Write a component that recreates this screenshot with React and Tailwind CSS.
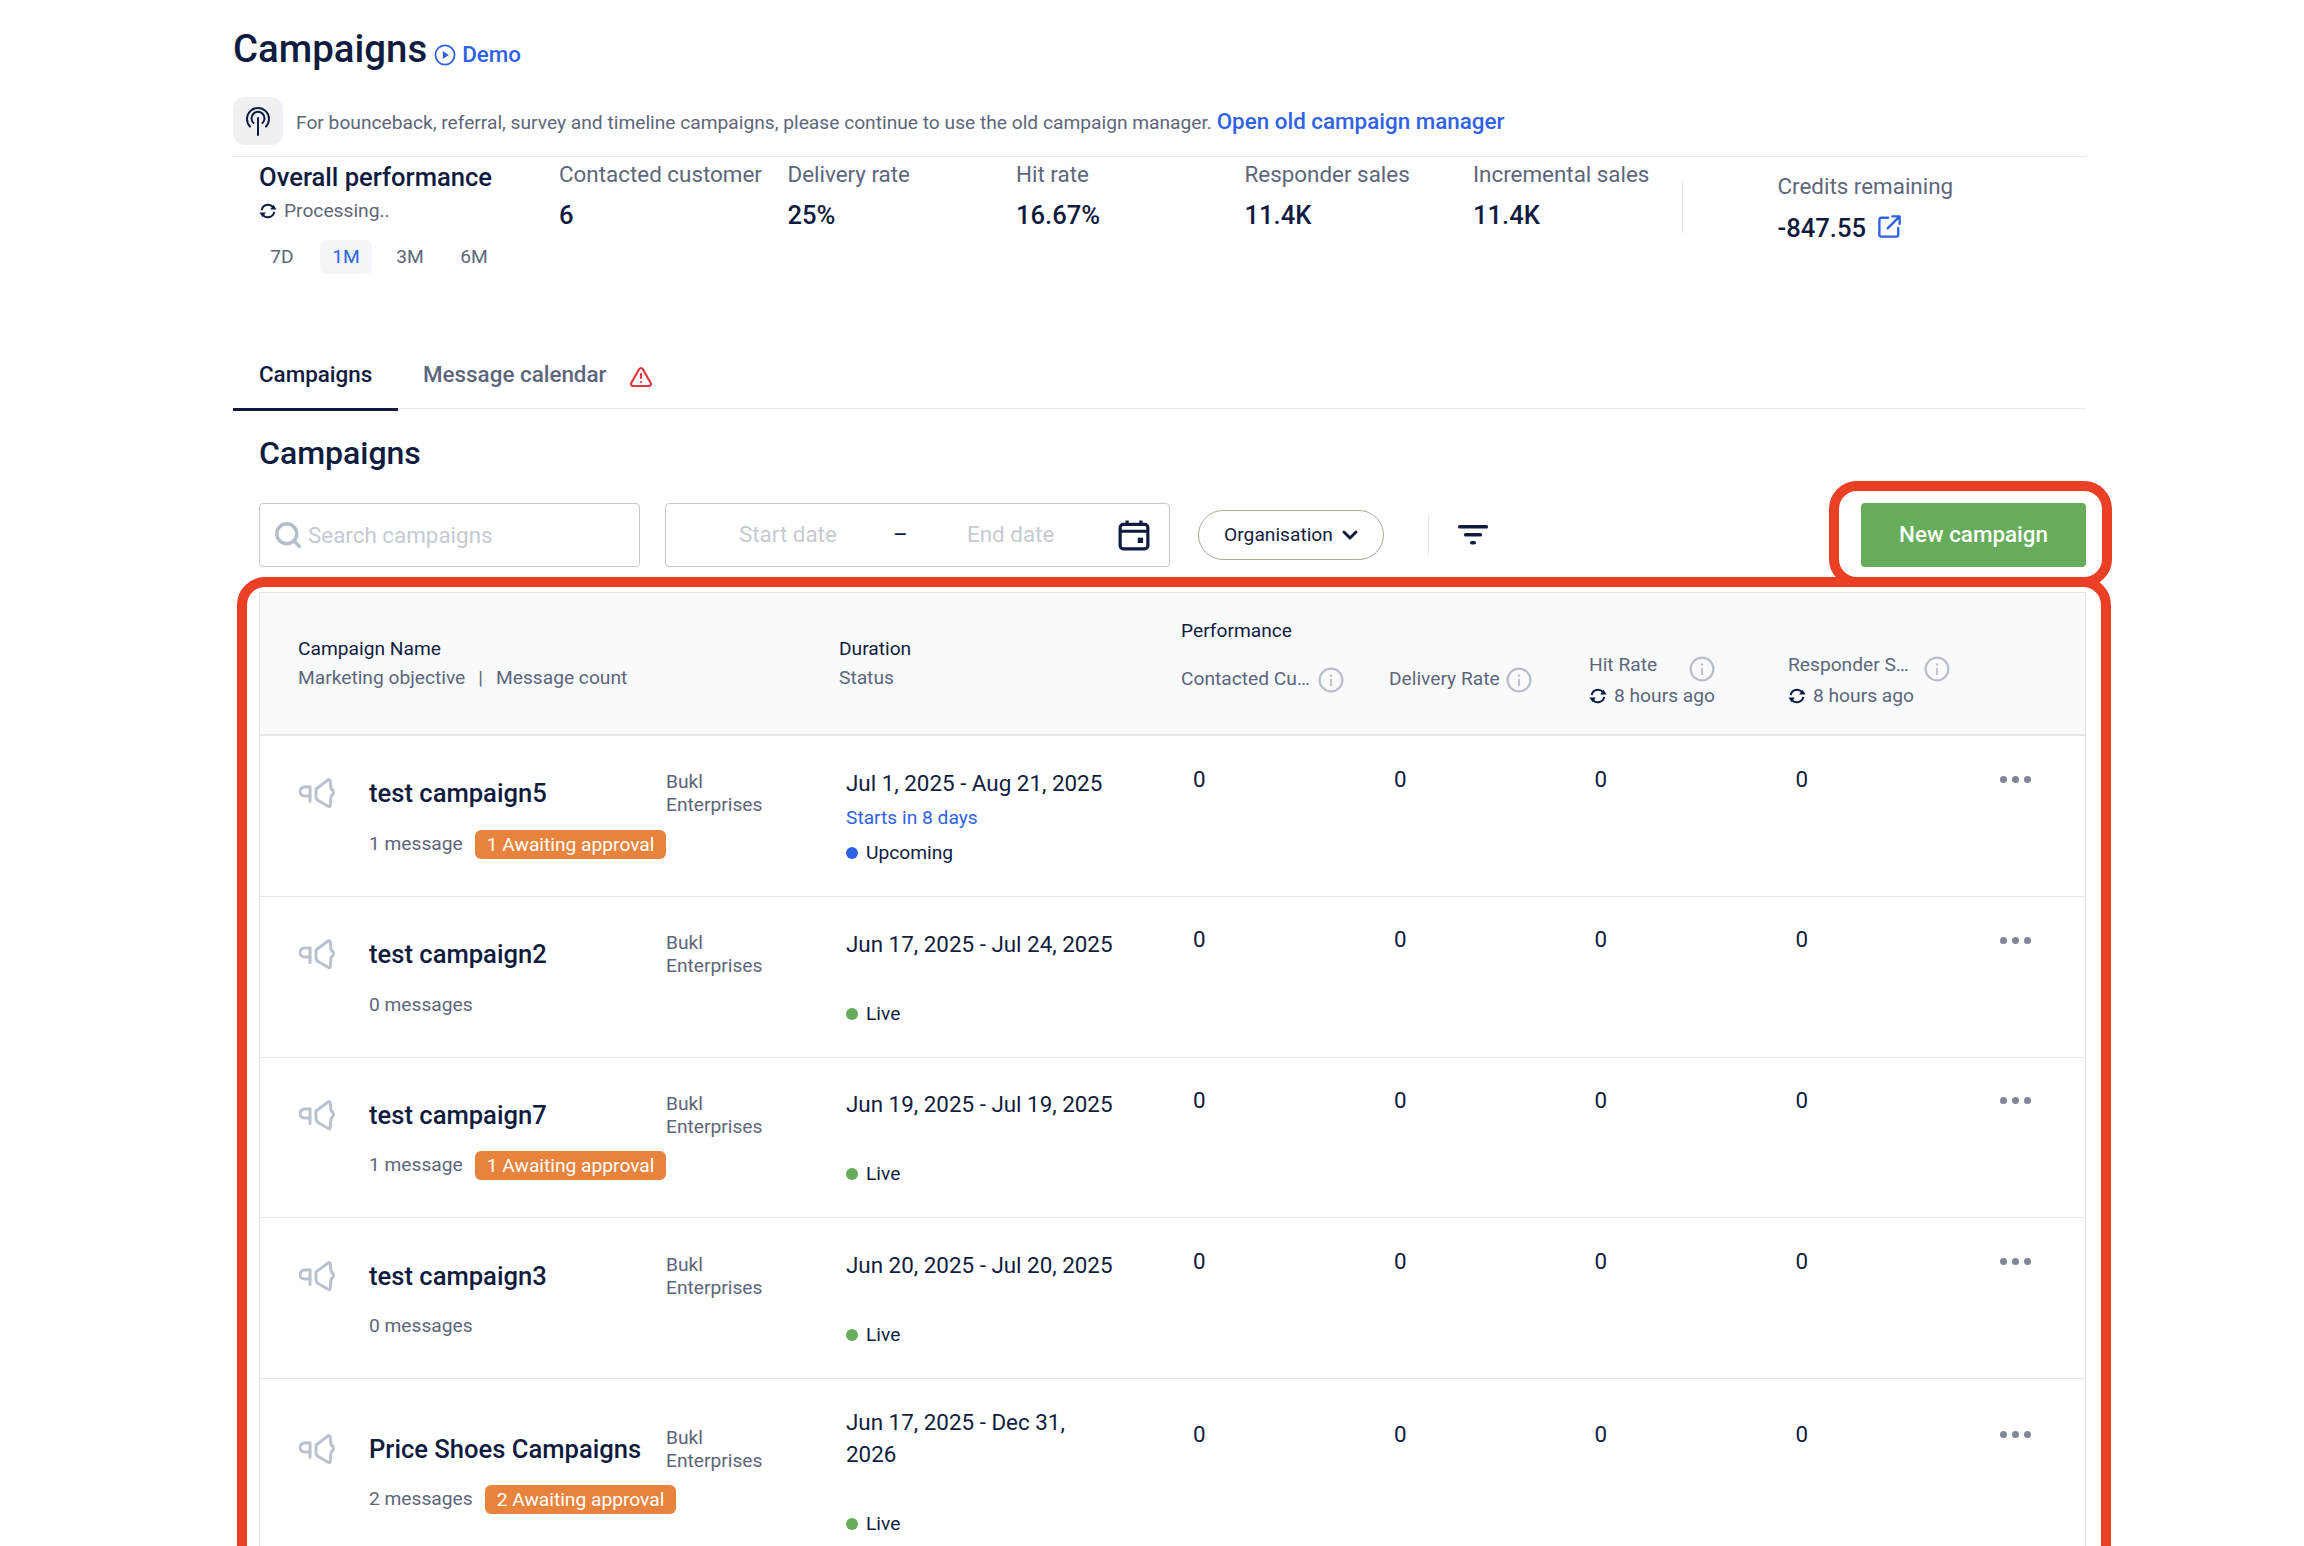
import { ChevronDown, Search, TriangleAlert } from "lucide-react";

const campaigns = [
  { name: "test campaign5", count: "1 message", approval: "1 Awaiting approval", dates: "Jul 1, 2025 - Aug 21, 2025", note: "Starts in 8 days", status: "Upcoming" },
  { name: "test campaign2", count: "0 messages", dates: "Jun 17, 2025 - Jul 24, 2025", status: "Live" },
  { name: "test campaign7", count: "1 message", approval: "1 Awaiting approval", dates: "Jun 19, 2025 - Jul 19, 2025", status: "Live" },
  { name: "test campaign3", count: "0 messages", dates: "Jun 20, 2025 - Jul 20, 2025", status: "Live" },
  { name: "Price Shoes Campaigns", count: "2 messages", approval: "2 Awaiting approval", dates: "Jun 17, 2025 - Dec 31, 2026", status: "Live" },
];

const stats = [
  { label: "Contacted customer", value: "6" },
  { label: "Delivery rate", value: "25%" },
  { label: "Hit rate", value: "16.67%" },
  { label: "Responder sales", value: "11.4K" },
  { label: "Incremental sales", value: "11.4K" },
];

function SyncIcon({ className }) {
  return (
    <svg className={className} viewBox="0 0 20 20" fill="none" stroke="#0f1c40" strokeWidth="2.2">
      <path d="M3 9A7.200 7.200 0 0 1 15.500 5.500" />
      <path d="M17 11A7.200 7.200 0 0 1 4.500 14.500" />
      <path d="M12.500 8.200h7L16 3z" fill="#0f1c40" stroke="none" />
      <path d="M7.500 11.800h-7L4 17z" fill="#0f1c40" stroke="none" />
    </svg>
  );
}

function InfoIcon({ className }) {
  return (
    <svg className={`w-[26px] h-[26px] shrink-0 ${className || ""}`} viewBox="0 0 26 26" fill="none" stroke="#b8bfca" strokeWidth="2.2">
      <circle cx="13" cy="13" r="11.400" />
      <path d="M13 12v7" strokeWidth="1.800" />
      <circle cx="13" cy="8.400" r="1.200" fill="#b8bfca" stroke="none" />
    </svg>
  );
}

function MegaphoneIcon() {
  return (
    <svg className="w-[36px] h-[33px] shrink-0" viewBox="0 0 36 32" fill="none" stroke="#bcc2cd" strokeWidth="3" strokeLinejoin="round" strokeLinecap="round">
      <path d="M11 9.500H5.500a4.500 4.500 0 0 0 0 9H11" />
      <path d="M11 9.500V24" />
      <path d="M17 11.500 29 2.500c1.200-.8 2-.2 2.300 1L32 11c1 .8 2.500 2.500 2.500 4s-1.500 3.200-2.500 4l-.7 9c-.3 1-1 1.500-2.300.8L20 23.500c-2-1-3-2-3-4.500z" />
    </svg>
  );
}

function StatusDot({ status }) {
  return status === "Live" ? (
    <span className="w-[12px] h-[12px] rounded-full bg-[#66ac5a]" />
  ) : (
    <span className="w-[12px] h-[12px] rounded-full bg-[#2f62e6]" />
  );
}

function CampaignRow({ row }) {
  return (
    <div className="flex items-center min-h-[160.75px] border-t border-[#e4e6ea] py-[23px] first:border-t-0">
      <div className="w-[70px] ml-[39px] pb-[44px] shrink-0">
        <MegaphoneIcon />
      </div>
      <div className="w-[297px] pt-[3px] shrink-0">
        <div className="text-[25.6px] leading-[36px] font-medium text-[#0f1c40] whitespace-nowrap">{row.name}</div>
        <div className="flex items-center gap-[12px] mt-[18px] h-[30px] whitespace-nowrap">
          <span className="text-[19.2px] text-[#5d667b] shrink-0">{row.count}</span>
          {row.approval && (
            <span className="bg-[#e8833d] text-white text-[19.2px] leading-[29px] h-[29px] px-[12px] rounded-[6px] shrink-0">{row.approval}</span>
          )}
        </div>
      </div>
      <div className="w-[180px] pb-[45px] shrink-0">
        <div className="w-[110px] text-[19.2px] leading-[23px] text-[#5d667b]">Bukl Enterprises</div>
      </div>
      <div className="w-[347px] pt-[4px] shrink-0">
        <div className="w-[270px] text-[22.4px] leading-[32px] text-[#0f1c40]">{row.dates}</div>
        <div className="h-[38px] pt-[3px] text-[19.2px] leading-[32px] text-[#2f62e6]">{row.note}</div>
        <div className="flex items-center gap-[8px] text-[19.2px] leading-[32px] text-[#0f1c40]">
          <StatusDot status={row.status} />
          {row.status}
        </div>
      </div>
      <div className="flex items-start pb-[73px] text-[22.4px] text-[#0f1c40]">
        <div className="w-[201px]">0</div>
        <div className="w-[200.5px]">0</div>
        <div className="w-[201px]">0</div>
        <div className="w-[204.5px]">0</div>
      </div>
      <div className="flex gap-[5px] pb-[73px]">
        <span className="w-[7px] h-[7px] rounded-full bg-[#7e8698]" />
        <span className="w-[7px] h-[7px] rounded-full bg-[#7e8698]" />
        <span className="w-[7px] h-[7px] rounded-full bg-[#7e8698]" />
      </div>
    </div>
  );
}

export default function App() {
  return (
    <div className="relative h-[1546px] overflow-hidden bg-white font-['Roboto',sans-serif] px-[233px] pr-[218px]">
      {/* Title */}
      <div className="flex items-end pt-[23px] h-[74px]">
        <h1 className="text-[38.4px] leading-[48px] font-medium text-[#0f1c40] pb-[1px]">Campaigns</h1>
        <svg className="w-[22px] h-[22px] ml-[7px] mb-[8px]" viewBox="0 0 22 22" fill="none" stroke="#2f62e6" strokeWidth="1.800">
          <circle cx="11" cy="11" r="9.600" />
          <path d="M8.800 7v8l6-4z" fill="#2f62e6" stroke="none" />
        </svg>
        <a className="ml-[6px] mb-[7px] text-[22.4px] leading-[26px] font-medium text-[#2f62e6]">Demo</a>
      </div>

      {/* Old campaign manager notice */}
      <div className="flex items-center mt-[23px] h-[48px]">
        <div className="w-[50px] h-[48px] rounded-[12px] bg-[#eef0f3] flex items-center justify-center">
          <svg className="w-[28px] h-[30px]" viewBox="0 0 28 30" fill="none" stroke="#0f1c40" strokeWidth="2" strokeLinecap="round">
            <path d="M6 20.500a11 11 0 1 1 16 0" />
            <path d="M9.500 17a6.500 6.500 0 1 1 9 0" />
            <path d="M14 12v17" />
          </svg>
        </div>
        <p className="ml-[13px] pt-[1px] text-[19.2px] text-[#5d667b]">
          For bounceback, referral, survey and timeline campaigns, please continue to use the old campaign manager.{" "}
          <a className="text-[#2f62e6] font-medium text-[22.4px]">Open old campaign manager</a>
        </p>
      </div>

      {/* Overall performance */}
      <div className="flex mt-[11px] border-t border-[#e4e6ea] h-[150px]">
        <div className="w-[326px] pl-[26px] shrink-0">
          <div className="mt-[3px] text-[25.6px] leading-[34px] font-medium text-[#0f1c40]">Overall performance</div>
          <div className="flex items-center gap-[7px] mt-[4px] text-[19.2px] leading-[26px] text-[#5d667b]">
            <SyncIcon className="w-[18px] h-[18px]" />
            Processing..
          </div>
          <div className="flex items-center gap-[12px] mt-[16px] -ml-[3px] text-[19.2px] text-[#5d667b]">
            <span className="w-[52px] h-[34px] flex items-center justify-center">7D</span>
            <span className="w-[52px] h-[34px] flex items-center justify-center rounded-[6px] bg-[#f3f5f8] text-[#2f62e6]">1M</span>
            <span className="w-[52px] h-[34px] flex items-center justify-center">3M</span>
            <span className="w-[52px] h-[34px] flex items-center justify-center">6M</span>
          </div>
        </div>
        {stats.map((stat) => (
          <div key={stat.label} className="w-[228.5px] shrink-0">
            <div className="mt-[1px] text-[22.4px] leading-[32px] text-[#5d667b] whitespace-nowrap">{stat.label}</div>
            <div className="mt-[8px] text-[25.6px] leading-[34px] font-medium text-[#0f1c40]">{stat.value}</div>
          </div>
        ))}
        <div className="self-start mt-[24px] h-[52px] border-l border-[#e4e6ea] -ml-[20px] pl-[95px] shrink-0">
          <div className="mt-[-11px] text-[22.4px] leading-[32px] text-[#5d667b] whitespace-nowrap">Credits remaining</div>
          <div className="flex items-center gap-[12px] mt-[9px]">
            <span className="text-[25.6px] leading-[34px] font-medium text-[#0f1c40]">-847.55</span>
            <svg className="w-[23px] h-[23px] mb-[3px]" viewBox="0 0 25 25" fill="none" stroke="#2f62e6" strokeWidth="2.600" strokeLinecap="round" strokeLinejoin="round">
              <path d="M11 3H3.500A2 2 0 0 0 1.500 5v16.500a2 2 0 0 0 2 2h16.500a2 2 0 0 0 2-2V14" />
              <path d="M10.500 14.500 23 2M15.500 1.500H23.500V9.500" />
            </svg>
          </div>
        </div>
      </div>

      {/* Tabs */}
      <div className="flex items-center mt-[39px] h-[64px] border-b border-[#e8eaed]">
        <div className="relative h-[64px] w-[165px] pl-[26px] pb-[4px] flex items-center text-[22.4px] font-medium text-[#0f1c40]">
          Campaigns
          <span className="absolute left-0 right-0 bottom-[-2px] h-[3px] bg-[#0f1c40]" />
        </div>
        <div className="ml-[25px] pb-[4px] text-[22.4px] font-medium text-[#5d667b]">Message calendar</div>
        <TriangleAlert className="ml-[23px] mt-[1px] w-[24px] h-[24px] text-[#e0363f]" strokeWidth={2.2} />
      </div>

      {/* Heading */}
      <h2 className="mt-[24px] ml-[26px] text-[32px] leading-[40px] font-medium text-[#0f1c40]">Campaigns</h2>

      {/* Toolbar */}
      <div className="flex items-center mt-[30px] ml-[26px] h-[64px]">
        <div className="flex items-center w-[381px] h-[64px] rounded-[4px] border border-[#c4c9d3] pl-[13px]">
          <Search className="w-[30px] h-[30px] text-[#b7bdc9]" strokeWidth={2.8} />
          <span className="ml-[5px] pt-[2px] text-[22.4px] text-[#c6cad3]">Search campaigns</span>
        </div>
        <div className="flex items-center w-[505px] h-[64px] ml-[25px] rounded-[4px] border border-[#c4c9d3]">
          <span className="ml-[73px] w-[154px] text-[22.4px] text-[#c6cad3]">Start date</span>
          <span className="w-[74px] text-[22.4px] text-[#0f1c40]">–</span>
          <span className="w-[151px] text-[22.4px] text-[#c6cad3]">End date</span>
          <svg className="w-[32px] h-[32px]" viewBox="0 0 30 30" fill="none" stroke="#0f1c40" strokeWidth="3">
            <rect x="2" y="5" width="26" height="23" rx="3" />
            <path d="M2 11.500h26M8.500 1.500v4M21.500 1.500v4" />
            <rect x="18.500" y="17.500" width="5" height="5" fill="#0f1c40" stroke="none" />
          </svg>
        </div>
        <div className="flex items-center justify-center gap-[5px] w-[186px] h-[50px] ml-[28px] pl-[4px] rounded-full border border-[#a9a99b] text-[19.2px] text-[#0f1c40]">
          Organisation
          <ChevronDown className="w-[24px] h-[24px]" strokeWidth={3} />
        </div>
        <div className="w-px h-[40px] ml-[44px] bg-[#e4e6ea]" />
        <svg className="w-[30px] h-[20px] ml-[29px]" viewBox="0 0 30 20">
          <rect x="0" y="0" width="30" height="3.500" rx="1.500" fill="#0f1c40" />
          <rect x="6" y="8" width="18" height="3.500" rx="1.500" fill="#0f1c40" />
          <rect x="12" y="16" width="6" height="3.500" rx="1.750" fill="#0f1c40" />
        </svg>
        <button className="ml-auto w-[225px] h-[64px] rounded-[4px] bg-[#66ac5a] text-white text-[22.4px] font-medium">New campaign</button>
      </div>

      {/* Table */}
      <div className="mt-[25px] ml-[26px] border border-[#e4e6ea] border-b-0">
        <div className="flex items-center h-[142px] bg-[#f9fafc] border-b border-[#e4e6ea]">
          <div className="w-[541px] ml-[38px] shrink-0 text-[19.2px] leading-[30px]">
            <div className="text-[#0f1c40]">Campaign Name</div>
            <div className="flex text-[#5d667b] -mt-[1px]">
              Marketing objective
              <span className="mx-[13px]">|</span>
              Message count
            </div>
          </div>
          <div className="w-[342px] shrink-0 text-[19.2px] leading-[30px]">
            <div className="text-[#0f1c40]">Duration</div>
            <div className="text-[#5d667b] -mt-[1px]">Status</div>
          </div>
          <div className="text-[19.2px] text-[#5d667b]">
            <div className="leading-[30px] text-[#0f1c40]">Performance</div>
            <div className="flex items-center h-[62px] mt-[3px] leading-[30px]">
              <div className="flex items-center gap-[8px] w-[208px]">
                <span className="-mt-[3px]">Contacted Cu…</span>
                <InfoIcon />
              </div>
              <div className="flex items-center gap-[6px] w-[200px]">
                <span className="-mt-[3px]">Delivery Rate</span>
                <InfoIcon />
              </div>
              <div className="w-[199px]">
                <div className="flex items-center">
                  <span className="w-[100px]">Hit Rate</span>
                  <InfoIcon className="mt-[4px] -mb-[4px]" />
                </div>
                <div className="flex items-center gap-[7px] mt-[1px]">
                  <SyncIcon className="w-[18px] h-[18px]" />
                  8 hours ago
                </div>
              </div>
              <div>
                <div className="flex items-center gap-[15px]">
                  Responder S…
                  <InfoIcon className="mt-[4px] -mb-[4px]" />
                </div>
                <div className="flex items-center gap-[7px] mt-[1px]">
                  <SyncIcon className="w-[18px] h-[18px]" />
                  8 hours ago
                </div>
              </div>
            </div>
          </div>
        </div>
        {campaigns.map((row) => (
          <CampaignRow key={row.name} row={row} />
        ))}
      </div>

      {/* Red review annotations over the page */}
      <div className="absolute left-[1829px] top-[481px] w-[283px] h-[106px] rounded-[28px] border-[10px] border-[#ec4026]" />
      <div className="absolute left-[237px] top-[577px] w-[1874px] h-[1100px] rounded-[28px] border-[10px] border-[#ec4026]" />
    </div>
  );
}
